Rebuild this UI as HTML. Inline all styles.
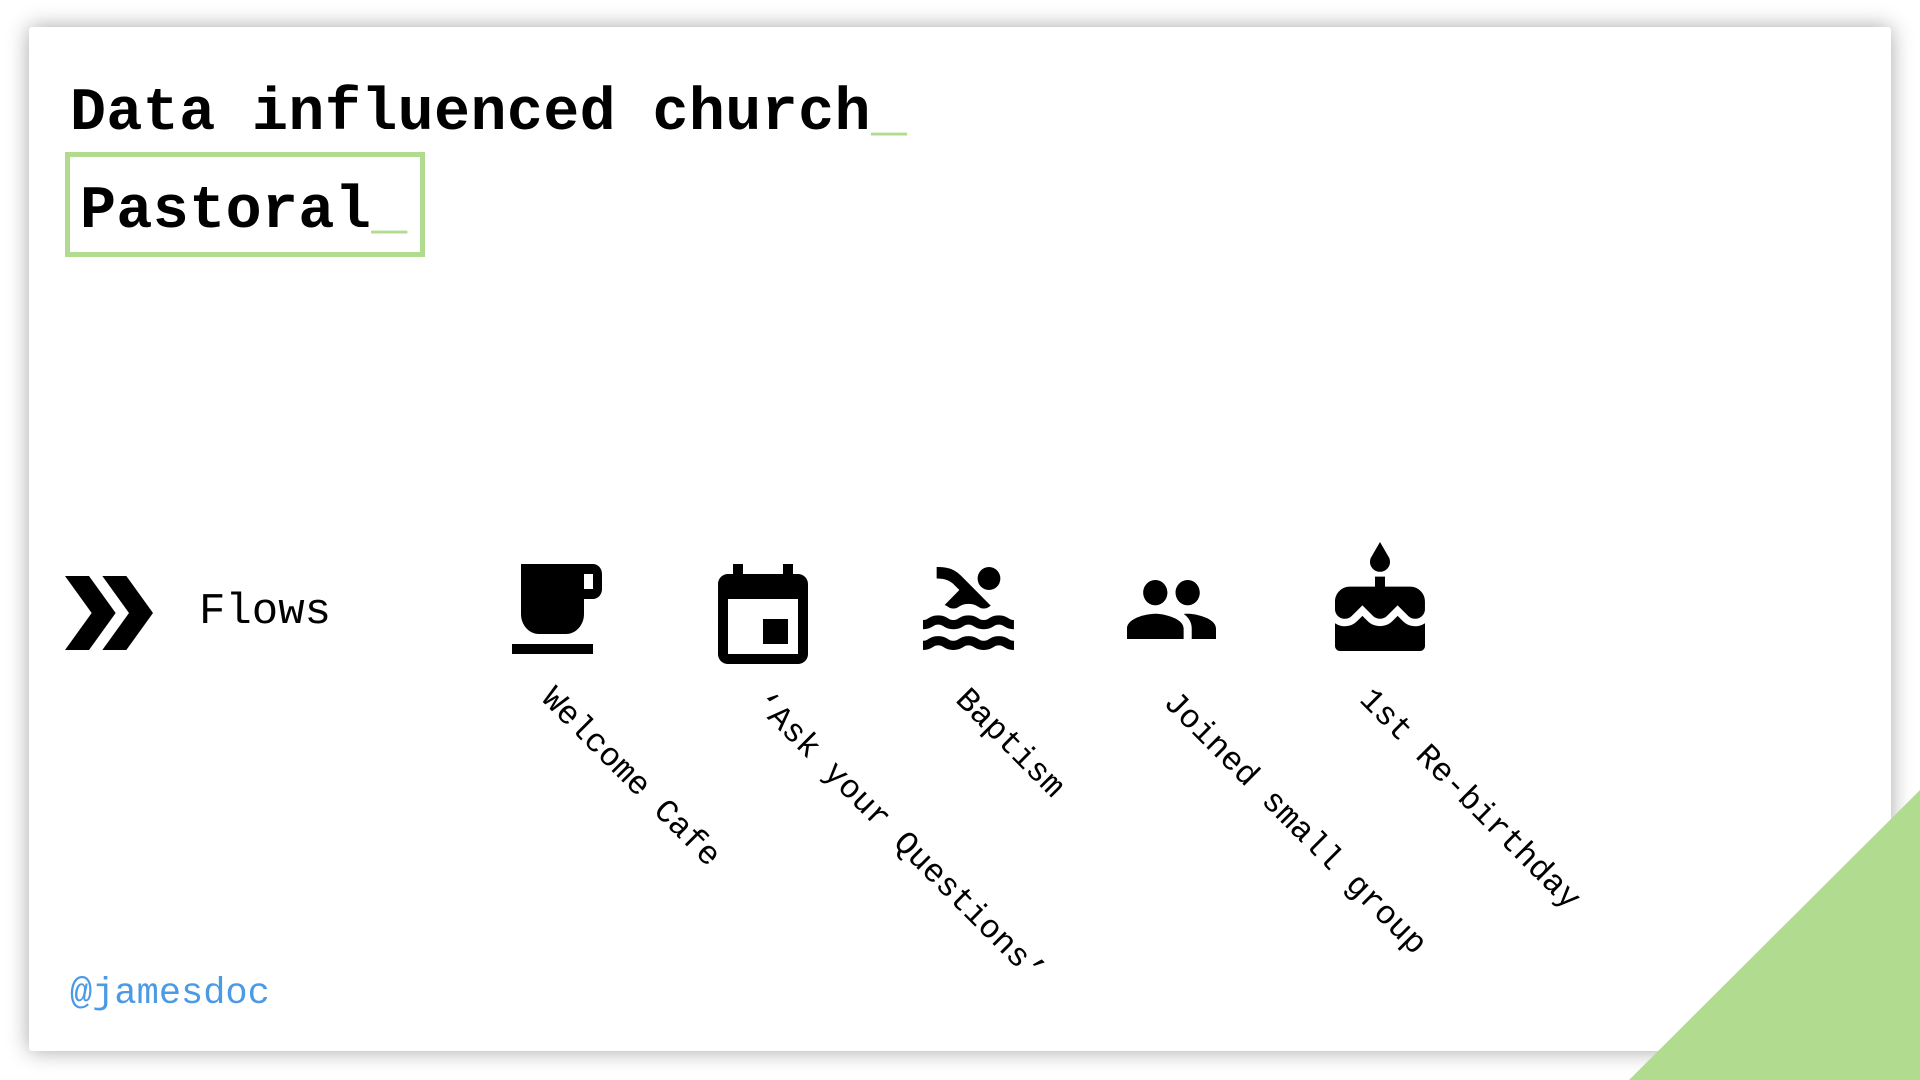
<!DOCTYPE html>
<html><head><meta charset="utf-8"><style>
html,body{margin:0;padding:0;width:1920px;height:1080px;overflow:hidden;background:#fff;font-family:"Liberation Mono",monospace;}
.card{position:absolute;left:29px;top:27px;width:1862px;height:1024px;background:#fff;box-shadow:0 0 22px rgba(0,0,0,.35);border-radius:3px;}
.tri{position:absolute;left:0;top:0;}
.t{position:absolute;font-weight:bold;font-size:60px;color:#000;line-height:1;white-space:pre;letter-spacing:0.4px;}
.u{color:#b1dc8f;}
.box{position:absolute;left:65px;top:152px;width:350px;height:95px;border:5px solid #b1dc8f;}
svg.i{position:absolute;}
.lab{position:absolute;font-size:33px;line-height:1;white-space:pre;transform:rotate(45deg);transform-origin:0 0;color:#000;}
</style></head><body>
<div class="card"></div>
<svg class="tri" width="1920" height="1080"><polygon points="1629,1080 1920,790 1920,1080" fill="#b1dc8f"/></svg>
<div class="t" style="left:70px;top:84px;">Data influenced church<span class="u">_</span></div>
<div class="box"></div>
<div class="t" style="left:80px;top:182px;">Pastoral<span class="u">_</span></div>

<svg class="i" style="left:65px;top:576px" width="88" height="74" viewBox="4 5 16.5 14" preserveAspectRatio="none"><path d="M15.5 5H11l5 7-5 7h4.5l5-7z M8.5 5H4l5 7-5 7h4.5l5-7z"/></svg>
<div style="position:absolute;left:199px;top:590px;font-size:44px;line-height:1;">Flows</div>

<svg class="i" style="left:512px;top:564px" width="90" height="90" viewBox="2 3 20 18" preserveAspectRatio="none"><path d="M20 3H4v10c0 2.21 1.79 4 4 4h6c2.21 0 4-1.790 4-4v-3h2c1.11 0 2-.89 2-2V5c0-1.11-.89-2-2-2zm0 5h-2V5h2v3zM2 21h18v-2H2v2z"/></svg>
<svg class="i" style="left:718px;top:564px" width="90" height="100" viewBox="3 1 18 20" preserveAspectRatio="none"><path d="M17 12h-5v5h5v-5zM16 1v2H8V1H6v2H5c-1.11 0-1.99.9-1.99 2L3 19c0 1.1.89 2 2 2h14c1.1 0 2-.9 2-2V5c0-1.1-.9-2-2-2h-1V1h-2zm3 18H5V8h14v11z"/></svg>
<svg class="i" style="left:923px;top:567px" width="91" height="83" viewBox="2 3 20 18" preserveAspectRatio="none"><path d="M22 21c-1.11 0-1.73-.37-2.18-.64-.37-.22-.6-.36-1.150-.36-.56 0-.78.13-1.15.36-.46.27-1.07.64-2.18.64s-1.73-.37-2.18-.64c-.37-.22-.6-.36-1.15-.36-.56 0-.78.13-1.15.36-.46.27-1.08.64-2.19.64-1.11 0-1.73-.37-2.18-.64-.37-.23-.6-.36-1.15-.36s-.78.13-1.15.36c-.46.27-1.08.64-2.19.64v-2c.56 0 .78-.13 1.15-.36.46-.27 1.08-.64 2.19-.64s1.73.37 2.18.64c.37.23.59.36 1.150.36.56 0 .78-.13 1.15-.36.46-.27 1.08-.64 2.19-.64 1.11 0 1.73.37 2.18.64.37.22.6.36 1.15.36s.78-.13 1.15-.36c.45-.27 1.07-.64 2.18-.64s1.73.37 2.18.64c.37.23.59.36 1.15.36v2zm0-4.5c-1.11 0-1.73-.37-2.18-.64-.37-.22-.6-.36-1.15-.36-.56 0-.78.13-1.15.36-.45.27-1.07.64-2.18.64s-1.73-.37-2.18-.64c-.37-.22-.6-.36-1.15-.36-.56 0-.78.13-1.15.36-.45.27-1.07.64-2.18.64s-1.73-.37-2.18-.64c-.37-.22-.6-.36-1.15-.36-.56 0-.78.13-1.15.36-.47.27-1.09.64-2.2.64v-2c.56 0 .78-.13 1.15-.36.45-.27 1.07-.64 2.18-.64s1.73.37 2.18.64c.37.22.6.36 1.15.36.56 0 .78-.13 1.15-.36.45-.27 1.07-.64 2.18-.64s1.73.37 2.18.64c.37.22.6.36 1.15.36s.78-.13 1.15-.36c.45-.27 1.07-.64 2.18-.64s1.73.37 2.18.64c.37.22.6.36 1.15.36v2zM8.67 12c.56 0 .78-.13 1.15-.36.46-.27 1.08-.64 2.19-.64 1.11 0 1.73.37 2.18.64.37.22.6.36 1.15.36s.78-.13 1.15-.36c.12-.07.26-.15.41-.23L10.48 5C8.930 3.45 7.5 2.99 5 3v2.5c1.82-.01 2.89.39 4 1.5l1 1-3.25 3.25c.31.12.56.27.77.39.37.23.59.36 1.15.36z"/><circle cx="16.5" cy="5.5" r="2.5"/></svg>
<svg class="i" style="left:1127px;top:580px" width="89" height="59" viewBox="1 5 22 14" preserveAspectRatio="none"><path d="M16 11c1.66 0 2.99-1.34 2.99-3S17.66 5 16 5c-1.66 0-3 1.34-3 3s1.34 3 3 3zm-8 0c1.66 0 2.99-1.34 2.99-3S9.66 5 8 5C6.34 5 5 6.34 5 8s1.34 3 3 3zm0 2c-2.33 0-7 1.17-7 3.5V19h14v-2.5c0-2.33-4.67-3.5-7-3.5zm8 0c-.29 0-.62.02-.97.05 1.16.84 1.97 1.97 1.97 3.45V19h6v-2.5c0-2.33-4.67-3.5-7-3.5z"/></svg>
<svg class="i" style="left:1335px;top:542px" width="90" height="109" viewBox="3 0 18 22" preserveAspectRatio="none"><path d="M12 6c1.11 0 2-.9 2-2 0-.38-.1-.73-.29-1.03L12 0l-1.71 2.97c-.19.3-.29.65-.29 1.03 0 1.1.9 2 2 2zm4.6 9.99l-1.07-1.07-1.08 1.07c-1.3 1.3-3.58 1.31-4.89 0l-1.07-1.07-1.09 1.07C6.75 16.64 5.88 17 4.96 17c-.73 0-1.4-.23-1.96-.61V21c0 .55.45 1 1 1h16c.55 0 1-.45 1-1v-4.61c-.56.38-1.23.61-1.96.61-.92 0-1.79-.36-2.44-1.01zM18 9h-5V7h-2v2H6c-1.66 0-3 1.34-3 3v1.54c0 1.08.88 1.960 1.96 1.96.52 0 1.02-.2 1.38-.57l2.14-2.13 2.13 2.13c.74.74 2.03.74 2.77 0l2.14-2.13 2.13 2.13c.37.37.86.57 1.38.57 1.08 0 1.96-.88 1.96-1.96V12C21 10.34 19.66 9 18 9z"/></svg>

<div class="lab" style="left:558px;top:682px;">Welcome Cafe</div>
<div class="lab" style="left:770px;top:686px;">‘Ask your Questions’</div>
<div class="lab" style="left:972px;top:683px;">Baptism</div>
<div class="lab" style="left:1180px;top:686px;">Joined small group</div>
<div class="lab" style="left:1376px;top:683px;">1st Re-birthday</div>

<div style="position:absolute;left:70px;top:976px;font-size:37px;line-height:1;color:#4a9ae6;">@jamesdoc</div>
</body></html>
